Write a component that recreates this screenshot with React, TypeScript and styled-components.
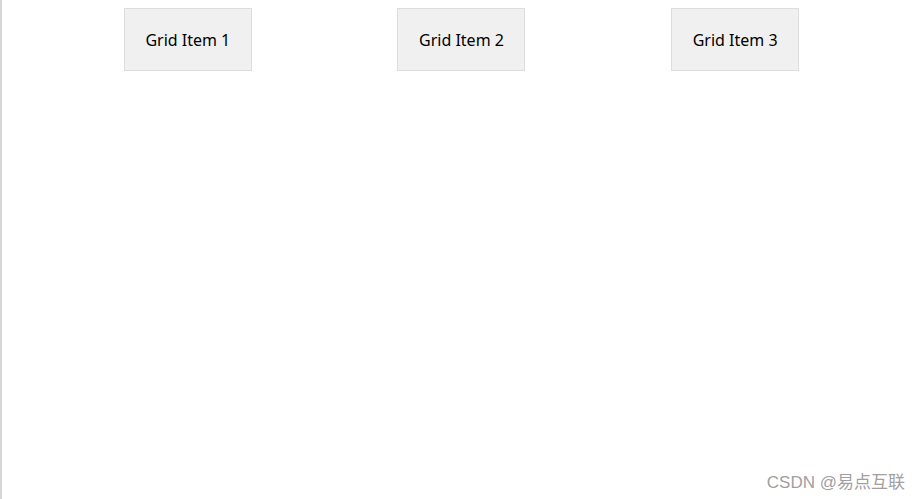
import React from "react"
import styled, { createGlobalStyle } from "styled-components"

const GlobalStyle = createGlobalStyle`
  html, body {
    margin: 0;
    padding: 0;
    background: #ffffff;
  }
  body {
    font-family: "Noto Sans", "Noto Sans CJK SC", sans-serif;
  }
`

const items = ["Grid Item 1", "Grid Item 2", "Grid Item 3"]

const App: React.FC = () => {
  return (
    <>
      <GlobalStyle />
      <S.Page>
        <S.Grid>
          {items.map((label) => (
            <S.Item key={label}>{label}</S.Item>
          ))}
        </S.Grid>
        <S.Watermark>CSDN @易点互联</S.Watermark>
      </S.Page>
    </>
  )
}

const S = {
  Page: styled.div`
    position: relative;
    box-sizing: border-box;
    min-height: 100vh;
    border-left: 2px solid #d6d6d6;
  `,
  Grid: styled.div`
    display: grid;
    grid-template-columns: repeat(3, 1fr);
    justify-items: center;
    align-items: start;
    padding: 8px 50px 0 49px;
  `,
  Item: styled.div`
    box-sizing: border-box;
    width: 128px;
    height: 63px;
    display: flex;
    align-items: center;
    justify-content: center;
    background: #f0f0f0;
    border: 1px solid #dddddd;
    color: #000000;
    font-size: 16px;
  `,
  Watermark: styled.div`
    position: absolute;
    right: 17px;
    bottom: 6px;
    color: #a0a0a0;
    font-family: "Liberation Sans", "Noto Sans CJK SC", sans-serif;
    font-size: 17px;
    line-height: 20px;
  `,
}

export default App
